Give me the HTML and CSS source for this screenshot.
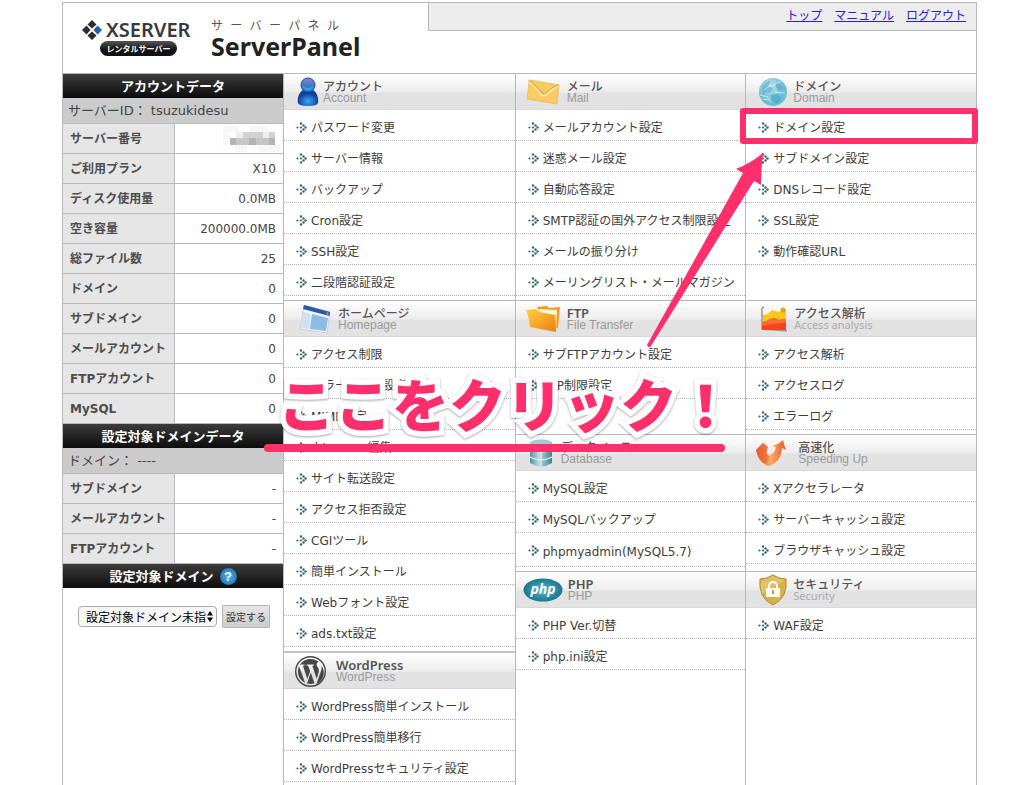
FILE: index.html
```html
<!DOCTYPE html>
<html lang="ja">
<head>
<meta charset="utf-8">
<title>ServerPanel</title>
<link rel="stylesheet" href="styles.css">
</head>
<body>
<div class="panel">
  <header class="header">
    <div class="brand">
      <div class="logo">
        <div class="logo-top">
          <svg class="logo-mark" viewBox="0 0 20 20" width="20" height="20"><path d="M10 0l4.500 4.500-4.500 4-4.500-4zM4.500 5.500l4 4.500-4 4.500-4.500-4.500zM10 11.500l4.500 4-4.500 4.500-4.500-4.500z" fill="#2d2d2f"/><path d="M15.500 5.500l4.500 4.500-4.500 4.500-4-4.500z" fill="#1d5fae"/></svg>
          <span class="logo-name">XSERVER</span>
        </div>
        <span class="logo-pill">レンタルサーバー</span>
      </div>
      <div class="product">
        <span class="product-kana">サーバーパネル</span>
        <h1 class="product-name">ServerPanel</h1>
      </div>
    </div>
    <nav class="topnav"><a href="#">トップ</a><a href="#">マニュアル</a><a href="#">ログアウト</a></nav>
  </header>
  <div class="main">
    <aside class="side">
      <h2 class="bar">アカウントデータ</h2>
      <p class="ident">サーバーID： tsuzukidesu</p>
      <table class="data">
        <tr><th scope="row">サーバー番号</th><td><svg class="mosaic" viewBox="0 0 58 26" width="58" height="26"><path fill="#f7f7f7" d="M0 0h16v6H0zM26 0h20v6H26zM0 6h6v14H0zM12 19h12v7H12zM36 19h22v7H36z"/><path fill="#d2d2d2" d="M20 6h20v6H20zM46 6h6v6h-6z"/><path fill="#eee" d="M13 6h7v6h-7zM40 6h6v6h-6z"/><path fill="#b4b4b4" d="M7 12h6v7H7zM26 12h7v7h-7zM46 12h6v7h-6z"/><path fill="#c6c6c6" d="M13 12h13v7H13zM33 12h13v7H33z"/></svg></td></tr>
        <tr><th scope="row">ご利用プラン</th><td>X10</td></tr>
        <tr><th scope="row">ディスク使用量</th><td>0.0MB</td></tr>
        <tr><th scope="row">空き容量</th><td>200000.0MB</td></tr>
        <tr><th scope="row">総ファイル数</th><td>25</td></tr>
        <tr><th scope="row">ドメイン</th><td>0</td></tr>
        <tr><th scope="row">サブドメイン</th><td>0</td></tr>
        <tr><th scope="row">メールアカウント</th><td>0</td></tr>
        <tr><th scope="row">FTPアカウント</th><td>0</td></tr>
        <tr><th scope="row">MySQL</th><td>0</td></tr>
      </table>
      <h2 class="bar">設定対象ドメインデータ</h2>
      <p class="ident">ドメイン： ----</p>
      <table class="data">
        <tr><th scope="row">サブドメイン</th><td>-</td></tr>
        <tr><th scope="row">メールアカウント</th><td>-</td></tr>
        <tr><th scope="row">FTPアカウント</th><td>-</td></tr>
      </table>
      <h2 class="bar"><label for="domain">設定対象ドメイン</label><span class="help">?</span></h2>
      <form class="pick">
        <select id="domain"><option>設定対象ドメイン未指定</option></select>
        <button type="button">設定する</button>
      </form>
    </aside>

    <div class="column">
      <section class="group">
        <h3 class="group-head">
          <svg class="icon-account" viewBox="0 0 22 30" width="22" height="30"><defs><linearGradient id="a1" x2="0" y2="1"><stop stop-color="#7d8fd0"/><stop offset=".5" stop-color="#4d74c0"/><stop offset="1" stop-color="#1786dd"/></linearGradient><radialGradient id="a2" cy=".7"><stop stop-color="#37aef4"/><stop offset="1" stop-color="#123d9c"/></radialGradient></defs><path d="M6 13C2 15 0 22 1 26q1 3 10 3t10-3c1-4-1-11-5-13-3 2-7 2-10 0z" fill="url(#a2)"/><circle cx="11" cy="8" r="7" fill="url(#a1)" stroke="#184a9e"/><path d="M5 9q6 4 12 0-1 4-6 4T5 9z" fill="#2ea5ed"/></svg>
          <span class="names"><span class="ja">アカウント</span><span class="en">Account</span></span>
        </h3>
        <ul class="links">
          <li><a href="#">パスワード変更</a></li><li><a href="#">サーバー情報</a></li><li><a href="#">バックアップ</a></li><li><a href="#">Cron設定</a></li><li><a href="#">SSH設定</a></li><li><a href="#">二段階認証設定</a></li>
        </ul>
      </section>
      <section class="group">
        <h3 class="group-head">
          <svg class="icon-home" viewBox="0 0 32 30" width="32" height="30"><path d="M5 1l26 7-3 21L1 25z" fill="#f2f6f9" stroke="#c8d1da"/><path d="M5 1l26 7-.6 4L4 5z" fill="#245aa8"/><path d="M27.500 8l2 .5-.4 2.500-2-.5z" fill="#ee704d"/><path d="M4 8l8 2-2 15-8-1z" fill="#cfe1f1"/><path d="M13 10l16 4-2 13-16-2z" fill="#8cbbe3"/></svg>
          <span class="names"><span class="ja">ホームページ</span><span class="en">Homepage</span></span>
        </h3>
        <ul class="links">
          <li><a href="#">アクセス制限</a></li><li><a href="#">エラーページ設定</a></li><li><a href="#">MIME設定</a></li><li><a href="#">.htaccess編集</a></li><li><a href="#">サイト転送設定</a></li><li><a href="#">アクセス拒否設定</a></li><li><a href="#">CGIツール</a></li><li><a href="#">簡単インストール</a></li><li><a href="#">Webフォント設定</a></li><li><a href="#">ads.txt設定</a></li>
        </ul>
      </section>
      <section class="group group-wp">
        <h3 class="group-head">
          <svg class="icon-wp" viewBox="0 0 24 24" width="31" height="31"><path fill="#464646" d="M12 0a12 12 0 1 0 0 24 12 12 0 0 0 0-24zm0 1.100a10.900 10.900 0 1 1 0 21.800 10.900 10.900 0 0 1 0-21.800zM2.300 12a9.700 9.700 0 0 0 5.500 8.700L3.100 8A9.600 9.600 0 0 0 2.300 12zm16.200-.5c0-1.200-.4-2-.8-2.700-.5-.8-1-1.500-1-2.300 0-.9.700-1.800 1.700-1.800h.1A9.700 9.700 0 0 0 3.900 6.700h.6c1 0 2.600-.1 2.600-.1.500 0 .6.700.1.800l-1.100.1 3.500 10.300 2.100-6.200-1.500-4.100-1-.1c-.5 0-.5-.8 0-.8 0 0 1.600.1 2.600.1s2.600-.1 2.600-.1c.5 0 .6.700.1.800l-1.100.1 3.400 10.200 1-3.100c.4-1.300.7-2.300.7-3.100zm-6.300 1.300-2.900 8.500a9.700 9.700 0 0 0 5.900-.2l-.1-.1zm8.300-5.500.1 1.300c0 1.300-.2 2.800-1 4.600l-3 8.500A9.700 9.700 0 0 0 20.500 7.300z"/></svg>
          <span class="names"><span class="ja latin">WordPress</span><span class="en">WordPress</span></span>
        </h3>
        <ul class="links">
          <li><a href="#">WordPress簡単インストール</a></li><li><a href="#">WordPress簡単移行</a></li><li><a href="#">WordPressセキュリティ設定</a></li>
        </ul>
      </section>
    </div>

    <div class="matrix">
      <section class="group">
        <h3 class="group-head">
          <svg class="icon-mail" viewBox="0 0 34 26" width="34" height="26"><path d="M3 1l30 5q-1 4-2 19L1 20Q3 8 3 1z" fill="#fccb62" stroke="#efbd62"/><path d="M3 3q8 6 12 13 4 2 6-1 5-5 11-8" fill="none" stroke="#ffedb8" stroke-width="1.500"/><path d="M4 2q8 6 12 12 2 2 5-1 5-5 11-7" fill="none" stroke="#c9a04c"/></svg>
          <span class="names"><span class="ja">メール</span><span class="en">Mail</span></span>
        </h3>
        <ul class="links">
          <li><a href="#">メールアカウント設定</a></li><li><a href="#">迷惑メール設定</a></li><li><a href="#">自動応答設定</a></li><li><a href="#">SMTP認証の国外アクセス制限設定</a></li><li><a href="#">メールの振り分け</a></li><li><a href="#">メーリングリスト・メールマガジン</a></li>
        </ul>
      </section>
      <section class="group">
        <h3 class="group-head">
          <svg class="icon-domain" viewBox="0 0 28 28" width="28" height="28"><defs><radialGradient id="g1" cx=".4" cy=".3"><stop stop-color="#b9e3ee"/><stop offset="1" stop-color="#6bbdd4"/></radialGradient></defs><circle cx="14" cy="14" r="14" fill="url(#g1)"/><path d="M3 9q5-6 9-6l-3 5 5 2-3 5-4-1-3 3zM17 4q6 2 7 7l-4 2-3-4zM12 17l7-1 3 5-4 5q-5-1-6-9z" fill="#3f9cbb" opacity=".45"/><path d="M1 17l8 2 3 6M13 8l9-5M5 12l7-5M15 14l11 1M4 21l6 1" stroke="#e0f5fa" fill="none" opacity=".7"/></svg>
          <span class="names"><span class="ja">ドメイン</span><span class="en">Domain</span></span>
        </h3>
        <ul class="links">
          <li class="marked"><a href="#">ドメイン設定</a></li><li><a href="#">サブドメイン設定</a></li><li><a href="#">DNSレコード設定</a></li><li><a href="#">SSL設定</a></li><li><a href="#">動作確認URL</a></li>
        </ul>
      </section>
      <section class="group">
        <h3 class="group-head">
          <svg class="icon-ftp" viewBox="0 0 36 28" width="36" height="28"><defs><linearGradient id="f1" x2="1" y2="1"><stop stop-color="#ffd03d"/><stop offset="1" stop-color="#ee7d12"/></linearGradient></defs><path d="M12 2l10-1 2 2 11-1-2 21-12-3z" fill="#f49a1b"/><path d="M14 4l18 1-1 19-14-8z" fill="#fff5dd"/><path d="M1 5l10-1 3 3 16 3q1 9 1 17L5 22Q4 12 1 5z" fill="url(#f1)"/></svg>
          <span class="names"><span class="ja latin">FTP</span><span class="en">File Transfer</span></span>
        </h3>
        <ul class="links">
          <li><a href="#">サブFTPアカウント設定</a></li><li><a href="#">FTP制限設定</a></li>
        </ul>
      </section>
      <section class="group">
        <h3 class="group-head">
          <svg class="icon-access" viewBox="0 0 29 26" width="29" height="26"><path d="M4 1q-3 1-2 4v18l25 2" stroke="#999" fill="none" stroke-width="1.500"/><path d="M3 9q5 0 9-5l6 2 8-3v14H3z" fill="#f8c819"/><circle cx="23" cy="4" r="2.500" fill="#dca80c"/><path d="M2 16q4 0 8-3l5-1 3 2 8-1v11L2 24z" fill="#f4431e"/><path d="M2 16q4 0 8-3l5-1 3 2 8-1v4q-12 0-24 3z" fill="#fb6e31"/></svg>
          <span class="names"><span class="ja">アクセス解析</span><span class="en humanist">Access analysis</span></span>
        </h3>
        <ul class="links">
          <li><a href="#">アクセス解析</a></li><li><a href="#">アクセスログ</a></li><li><a href="#">エラーログ</a></li>
        </ul>
      </section>
      <section class="group">
        <h3 class="group-head">
          <svg class="icon-db" viewBox="0 0 24 28" width="24" height="28"><defs><linearGradient id="d1"><stop stop-color="#4f929c"/><stop offset=".4" stop-color="#b9dce1"/><stop offset="1" stop-color="#3c8490"/></linearGradient></defs><path d="M1 4q11-6 22 0v20q-11 7-22 0z" fill="url(#d1)"/><ellipse cx="12" cy="4" rx="11" ry="3.500" fill="#a5cbd0"/><path d="M1 10q11 6 22 0M1 18q11 6 22 0M12 7v20" fill="none" stroke="#dff0f2" stroke-width="1.300"/></svg>
          <span class="names"><span class="ja">データベース</span><span class="en">Database</span></span>
        </h3>
        <ul class="links">
          <li><a href="#">MySQL設定</a></li><li><a href="#">MySQLバックアップ</a></li><li class="tall"><a href="#">phpmyadmin(MySQL5.7)</a></li>
        </ul>
      </section>
      <section class="group">
        <h3 class="group-head">
          <svg class="icon-speed" viewBox="0 0 30 27" width="30" height="27"><defs><linearGradient id="s1"><stop stop-color="#e94e24"/><stop offset=".5" stop-color="#f9ad62"/><stop offset="1" stop-color="#ea5528"/></linearGradient></defs><path d="M0 10L7 3l5 4q-3 7 1 9 6-3 7-9l-4-1Q23 4 27 0q1 5 3 10l-4-2Q25 22 13 26 3 24 0 10z" fill="url(#s1)"/><path d="M0 10L7 3l5 4q-3 7 1 9l-3 8Q2 20 0 10z" fill="#ed6236" opacity=".6"/></svg>
          <span class="names"><span class="ja">高速化</span><span class="en">Speeding Up</span></span>
        </h3>
        <ul class="links">
          <li><a href="#">Xアクセラレータ</a></li><li><a href="#">サーバーキャッシュ設定</a></li><li><a href="#">ブラウザキャッシュ設定</a></li>
        </ul>
      </section>
      <section class="group">
        <h3 class="group-head">
          <svg class="icon-php" viewBox="0 0 40 24" width="40" height="24"><defs><radialGradient id="p1"><stop stop-color="#54b7ca"/><stop offset="1" stop-color="#1b7690"/></radialGradient></defs><ellipse cx="20" cy="12" rx="19.500" ry="11.500" fill="url(#p1)"/><text x="20" y="16" text-anchor="middle" class="php-text">php</text></svg>
          <span class="names"><span class="ja latin">PHP</span><span class="en">PHP</span></span>
        </h3>
        <ul class="links">
          <li><a href="#">PHP Ver.切替</a></li><li><a href="#">php.ini設定</a></li>
        </ul>
      </section>
      <section class="group">
        <h3 class="group-head">
          <svg class="icon-security" viewBox="0 0 28 32" width="28" height="32"><path d="M14 1q6 4 13 4 2 19-13 26Q-1 24 1 5q7 0 13-4z" fill="#d9b24e" stroke="#b28a2e"/><path d="M14 2q6 4 12 4L3 20Q1 14 2 6q6 0 12-4z" fill="#e8ca7a" opacity=".6"/><path d="M10 15v-3a4 4 0 0 1 8 0v3" fill="none" stroke="#fff" stroke-width="2"/><rect x="7" y="14" width="14" height="9" rx="1" fill="#fff"/><path d="M13 16h2v4h-2z" fill="#c99b35"/></svg>
          <span class="names"><span class="ja">セキュリティ</span><span class="en humanist">Security</span></span>
        </h3>
        <ul class="links">
          <li><a href="#">WAF設定</a></li>
        </ul>
      </section>
    </div>
  </div>

  <div class="callout"><span class="callout-text">ここをクリック！</span></div>
  <svg class="arrow" viewBox="0 0 122 198" width="122" height="198"><path d="M1 194L97 22 90 18Q105 12 117 2 115 18 115 34L108 30 5 195Q3 198 1 194z" fill="#ff2f6c"/></svg>
</div>
</body>
</html>
```
FILE: styles.css
```css
* { box-sizing: border-box; }

body {
  margin: 0;
  background: #fff;
  color: #3d3d3d;
  font-family: "DejaVu Sans", "Noto Sans CJK JP", sans-serif;
  font-size: 12px;
  overflow: hidden;
}

h1, h2, h3, p, ul { margin: 0; padding: 0; }
ul { list-style: none; }
a { color: inherit; text-decoration: none; }

.panel {
  position: relative;
  margin: 2px 47px 0 62px;
  border: 1px solid #b9b9b9;
  border-bottom: 0;
  min-height: calc(100vh - 2px);
}

/* Header */
.header {
  display: flex;
  align-items: flex-start;
  height: 71px;
  border-bottom: 1px solid #b9b9b9;
}
.brand {
  display: flex;
  flex: 1;
  padding: 15px 0 0 19px;
  gap: 20px;
}
.logo { width: 109px; }
.logo-top { display: flex; align-items: center; gap: 4px; height: 23px; }
.logo-name {
  font: 600 20px/23px "Noto Sans", sans-serif;
  color: #39393b;
}
.logo-pill {
  display: block;
  width: 77px;
  margin-left: 18px;
  border-radius: 8px;
  background: linear-gradient(#555, #111 60%);
  color: #fff;
  font: 700 8px/15px "Noto Sans CJK JP", sans-serif;
  text-align: center;
}
.product-kana {
  display: block;
  width: 128px;
  font: 12px/14px "Noto Sans CJK JP", sans-serif;
  text-align: justify;
  text-align-last: justify;
  color: #555;
}
.product-name {
  font: 700 25px/28px "Noto Sans", sans-serif;
  color: #222;
}
.topnav {
  display: flex;
  flex: none;
  width: 60%;
  justify-content: flex-end;
  gap: 12px;
  padding: 0 10px;
  background: #ededed;
  border: 1px solid #b9b9b9;
  border-width: 0 0 1px 1px;
  line-height: 27px;
}
.topnav a { color: #2a1be0; text-decoration: underline; }

/* Page columns */
.main {
  display: grid;
  grid-template-columns: 221px 1fr 2fr;
  min-height: calc(100vh - 74px);
}
.side { border-right: 1px solid #b9b9b9; }
.bar {
  display: flex;
  justify-content: center;
  align-items: center;
  gap: 6px;
  height: 24px;
  background: linear-gradient(#3c3c3c, #0c0c0c);
  color: #fff;
  font: 700 13px/24px "Noto Sans CJK JP", sans-serif;
}
.help {
  width: 17px;
  height: 17px;
  border-radius: 50%;
  background: radial-gradient(#55b4ea, #1562a5);
  font: 700 13px/17px "Liberation Sans", sans-serif;
  text-align: center;
}
.ident {
  height: 25px;
  padding-left: 5px;
  background: #cbcbcb;
  font-size: 13px;
  line-height: 25px;
  color: #444;
  white-space: nowrap;
}
.data {
  width: 100%;
  border-collapse: separate;
  border-spacing: 0;
  border-bottom: 1px solid #b9b9b9;
}
.data th, .data td {
  height: 30px;
  padding: 0 7px;
  border-top: 1px solid #b9b9b9;
  line-height: 28px;
  white-space: nowrap;
}
.data th {
  width: 112px;
  background: #e5e5e5;
  border-right: 1px solid #b9b9b9;
  color: #4c4c4c;
  text-align: left;
}
.data td { text-align: right; color: #444; }
.mosaic { display: block; margin: 0 -5px 0 auto; }
.pick {
  display: flex;
  align-items: center;
  gap: 5px;
  padding: 17px 15px;
}
.pick select {
  appearance: none;
  flex: none;
  width: 139px;
  height: 21px;
  padding: 0 10px 0 7px;
  border: 1px solid #aaa;
  border-radius: 4px;
  background: #f8f8f8 url("data:image/svg+xml,%3Csvg xmlns='http://www.w3.org/2000/svg' width='6' height='11'%3E%3Cpath d='M3 0l3 4.500H0zM3 11l3-4.500H0z'/%3E%3C/svg%3E") no-repeat right 3px center;
  color: #000;
  font: 12px "Noto Sans CJK JP", sans-serif;
}
.pick button {
  height: 23px;
  padding: 0 3px;
  border: 1px solid #b5b5b5;
  border-radius: 1px;
  background: linear-gradient(#e6e6e6, #ccc);
  color: #333;
  font: 10px "Noto Sans CJK JP", sans-serif;
  white-space: nowrap;
}

/* Menu groups */
.matrix {
  display: grid;
  grid-template-columns: 1fr 1fr;
  grid-template-rows: auto auto auto 1fr;
}
.matrix .group { border-left: 1px solid #b9b9b9; }
.group { padding-bottom: 4px; }
.group + .group .group-head { border-top: 1px solid #b9b9b9; }
.column .group:first-child .group-head,
.matrix .group:nth-child(-n+2) .group-head { border-top: 0; height: 36px; }
.group.group-wp .group-head { border-top: 2px solid #c6c6c6; height: 38px; }
.group-head {
  display: flex;
  align-items: center;
  height: 37px;
  background: linear-gradient(#fff 0, #ededed 48%, #e2e2e2 54%, #e2e2e2 97%, #cfcfcf);
  font-weight: 400;
}
.group-head svg { flex: none; }
.names { display: flex; flex-direction: column; }
.ja {
  font: 500 12px/12px "Noto Sans CJK JP", sans-serif;
  color: #555;
}
.ja.latin { font: 600 13px/12px "Noto Sans", sans-serif; }
.en {
  font: 12px/12px "Liberation Sans", sans-serif;
  color: #9a9a9a;
}
.en.humanist { font: 11px/12px "Noto Sans", sans-serif; color: #aaa; }
.icon-account { margin: 0 4px 0 13px; }
.icon-home { margin: 0 7px 0 15px; }
.icon-wp { margin: 0 10px 0 11px; }
.icon-mail { margin: 0 7px 0 10px; }
.icon-domain { margin: 0 6px 0 13px; }
.icon-ftp { margin: 0 6px 0 9px; }
.icon-access { margin: 0 5px 0 14px; }
.icon-db { margin: 0 8px 0 13px; }
.icon-speed { margin: 0 12px 0 10px; }
.icon-php { margin: 0 5px 0 7px; }
.icon-security { margin: 0 6px 0 13px; }
.php-text { font: italic 700 14px "Noto Sans", sans-serif; fill: #fff; }

.links li {
  position: relative;
  height: 31px;
  border-bottom: 1px dotted #b5b5b5;
  line-height: 36px;
  white-space: nowrap;
}
.links .tall { height: 34px; line-height: 38px; }
.links a {
  display: block;
  height: 30px;
  padding-left: 27px;
  background: url("data:image/svg+xml,%3Csvg xmlns='http://www.w3.org/2000/svg' width='11' height='11' fill='%23346a74'%3E%3Ccircle cx='1.500' cy='5.500' r='1.100'/%3E%3Ccircle cx='5' cy='1.500' r='1.200'/%3E%3Ccircle cx='5' cy='5.500' r='1.100'/%3E%3Ccircle cx='5' cy='9.500' r='1.200'/%3E%3Ccircle cx='7.500' cy='3.500' r='1.200'/%3E%3Ccircle cx='7.500' cy='7.500' r='1.200'/%3E%3Ccircle cx='9.500' cy='5.500' r='1.200'/%3E%3C/svg%3E") no-repeat 12px 12px;
}

/* Annotations */
.marked::after {
  content: "";
  position: absolute;
  inset: -2px -2px -4px -6px;
  border: 6px solid #ff2f6c;
  border-radius: 3px;
}
.callout {
  position: absolute;
  top: 360px;
  left: 201px;
  width: 461px;
  padding: 0 0 11px 14px;
}
.callout::after {
  content: "";
  position: absolute;
  inset: auto 0 0 0;
  height: 8px;
  border-radius: 4px;
  background: #ff2f6c;
}
.callout-text {
  display: block;
  color: #ff2f6c;
  font: 900 57px/78px "Noto Sans CJK JP", sans-serif;
  white-space: nowrap;
  -webkit-text-stroke: 11px #fff;
  paint-order: stroke fill;
  stroke-linejoin: round;
  filter: drop-shadow(0 1px 1px rgba(0, 0, 0, .35));
}
.arrow {
  position: absolute;
  top: 148px;
  left: 583px;
}
```
